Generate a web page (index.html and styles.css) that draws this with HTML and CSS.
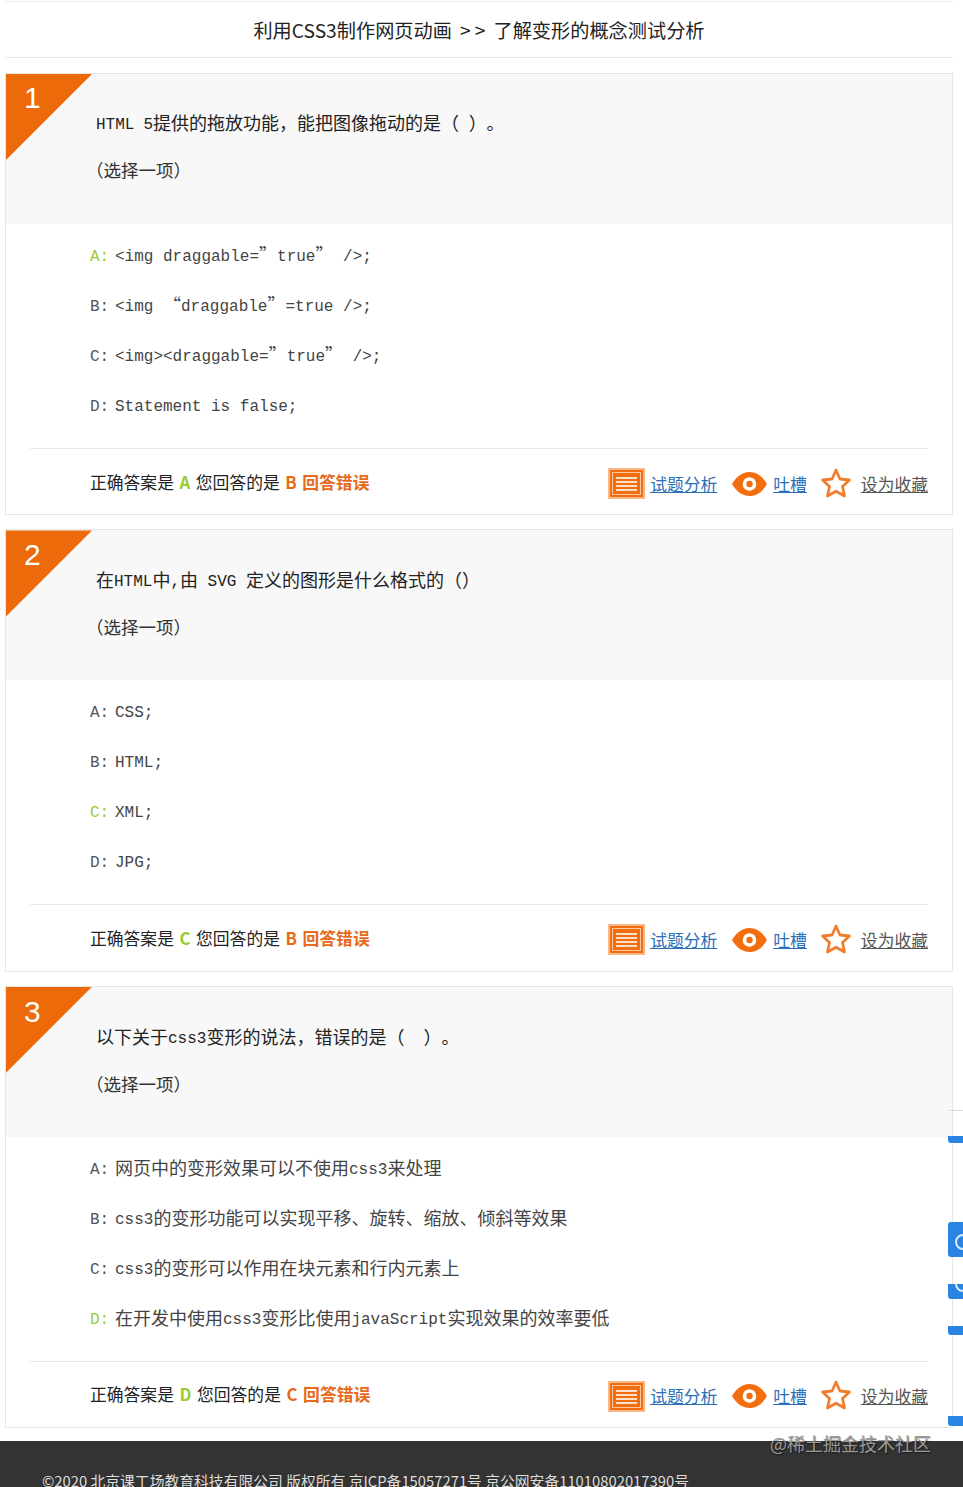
FILE: index.html
```html
<!DOCTYPE html>
<html lang="zh-CN">
<head>
    <meta charset="UTF-8">
    <title>了解变形的概念测试分析</title>
    <link rel="stylesheet" href="styles.css">
</head>
<body>
    <svg class="icon-defs" width="0" height="0">
        <symbol id="icon-book" viewBox="0 0 37 31">
            <rect x="0" y="0" width="37" height="31" fill="#f9b88a"/>
            <rect x="2" y="2" width="33" height="27" fill="#f26d0e"/>
            <rect x="4.5" y="4.5" width="28" height="22" fill="none" stroke="#fbc79f" stroke-width="1"/>
            <rect x="8" y="9" width="21" height="2" fill="#fde0c8"/>
            <rect x="8" y="13" width="21" height="2" fill="#fde0c8"/>
            <rect x="8" y="17" width="21" height="2" fill="#fde0c8"/>
            <rect x="8" y="21" width="21" height="2" fill="#fde0c8"/>
        </symbol>
        <symbol id="icon-eye" viewBox="0 0 35 24">
            <path d="M0 12C4 5 10 0 17.5 0S31 5 35 12C31 19 25 24 17.5 24S4 19 0 12Z" fill="#f26d0e"/>
            <circle cx="17.5" cy="12" r="6.8" fill="#fff"/>
            <circle cx="17.5" cy="12" r="3.2" fill="#f26d0e"/>
        </symbol>
        <symbol id="icon-star" viewBox="0 0 32 32">
            <path d="M16 3L20 12L29.5 13L22.5 19.6L24.5 29L16 24.2L7.5 29L9.500 19.6L2.500 13L12 12Z" fill="none" stroke="#ef7f2e" stroke-width="2.8" stroke-linejoin="round"/>
        </symbol>
    </svg>

    <div class="page">
        <h1 class="title">利用CSS3制作网页动画<span class="sep">&gt; &gt;</span>了解变形的概念测试分析</h1>

        <div class="card">
            <div class="question">
                <div class="badge"><span>1</span></div>
                <p class="q-text"><span class="en">HTML</span><span class="en gap">5</span>提供的拖放功能，能把图像拖动的是（<span class="en"> </span>）。</p>
                <p class="q-type">（选择一项）</p>
            </div>
            <ul class="options">
                <li><b class="key right">A:</b><span class="en">&lt;img draggable=</span>”<span class="en">true</span>”<span class="en"> /&gt;;</span></li>
                <li><b class="key">B:</b><span class="en">&lt;img </span>“<span class="en">draggable</span>”<span class="en">=true /&gt;;</span></li>
                <li><b class="key">C:</b><span class="en">&lt;img&gt;&lt;draggable=</span>”<span class="en">true</span>”<span class="en"> /&gt;;</span></li>
                <li><b class="key">D:</b><span class="en">Statement is false;</span></li>
            </ul>
            <div class="result">
                <div class="verdict">正确答案是 <b class="ok">A</b> 您回答的是 <b class="bad">B 回答错误</b></div>
                <div class="links">
                    <svg class="i-book"><use href="#icon-book"/></svg><a href="#">试题分析</a>
                    <svg class="i-eye"><use href="#icon-eye"/></svg><a href="#">吐槽</a>
                    <svg class="i-star"><use href="#icon-star"/></svg><a href="#" class="fav">设为收藏</a>
                </div>
            </div>
        </div>

        <div class="card">
            <div class="question">
                <div class="badge"><span>2</span></div>
                <p class="q-text">在<span class="en">HTML</span>中<span class="en">,</span>由<span class="en"> SVG </span>定义的图形是什么格式的（）</p>
                <p class="q-type">（选择一项）</p>
            </div>
            <ul class="options">
                <li><b class="key">A:</b><span class="en">CSS;</span></li>
                <li><b class="key">B:</b><span class="en">HTML;</span></li>
                <li><b class="key right">C:</b><span class="en">XML;</span></li>
                <li><b class="key">D:</b><span class="en">JPG;</span></li>
            </ul>
            <div class="result">
                <div class="verdict">正确答案是 <b class="ok">C</b> 您回答的是 <b class="bad">B 回答错误</b></div>
                <div class="links">
                    <svg class="i-book"><use href="#icon-book"/></svg><a href="#">试题分析</a>
                    <svg class="i-eye"><use href="#icon-eye"/></svg><a href="#">吐槽</a>
                    <svg class="i-star"><use href="#icon-star"/></svg><a href="#" class="fav">设为收藏</a>
                </div>
            </div>
        </div>

        <div class="card">
            <div class="question">
                <div class="badge"><span>3</span></div>
                <p class="q-text">以下关于<span class="en">css3</span>变形的说法，错误的是（<span class="en">  </span>）。</p>
                <p class="q-type">（选择一项）</p>
            </div>
            <ul class="options">
                <li><b class="key">A:</b>网页中的变形效果可以不使用<span class="en">css3</span>来处理</li>
                <li><b class="key">B:</b><span class="en">css3</span>的变形功能可以实现平移、旋转、缩放、倾斜等效果</li>
                <li><b class="key">C:</b><span class="en">css3</span>的变形可以作用在块元素和行内元素上</li>
                <li><b class="key right">D:</b>在开发中使用<span class="en">css3</span>变形比使用<span class="en">javaScript</span>实现效果的效率要低</li>
            </ul>
            <div class="result">
                <div class="verdict">正确答案是 <b class="ok">D</b> 您回答的是 <b class="bad">C 回答错误</b></div>
                <div class="links">
                    <svg class="i-book"><use href="#icon-book"/></svg><a href="#">试题分析</a>
                    <svg class="i-eye"><use href="#icon-eye"/></svg><a href="#">吐槽</a>
                    <svg class="i-star"><use href="#icon-star"/></svg><a href="#" class="fav">设为收藏</a>
                </div>
            </div>
        </div>
    </div>

    <div class="footer">©2020 北京课工场教育科技有限公司 版权所有 京ICP备15057271号 京公网安备11010802017390号</div>

    <!-- clipped floating toolbar on the right edge -->
    <div class="side-line"></div>
    <div class="side-tab tab-a"></div>
    <div class="side-tab tab-b"><i></i></div>
    <div class="side-tab tab-c"><i></i></div>
    <div class="side-tab tab-d"></div>
    <div class="side-tab tab-e"></div>

    <div class="watermark">@稀土掘金技术社区</div>
</body>
</html>
```

FILE: styles.css
```css
* {
    box-sizing: border-box;
}

html, body {
    height: 1487px;
    margin: 0;
    overflow: hidden;
}

body {
    position: relative;
    background-color: #fff;
    color: #222;
    font-family: "Noto Sans CJK SC", "Liberation Sans", sans-serif;
    text-spacing-trim: space-all;
}

.icon-defs {
    position: absolute;
}

.page {
    padding: 1px 10px 0 5px;
}

/* Title bar */
.title {
    height: 57px;
    margin: 0 0 15px;
    border-top: 1px solid #eee;
    border-bottom: 1px solid #e8e8e8;
    color: #222;
    font-size: 19.2px;
    font-weight: normal;
    line-height: 56px;
    text-align: center;
}

.sep {
    margin: 0 8px;
}

/* Question card */
.card {
    height: 442.4px;
    margin-bottom: 14px;
    border: 1px solid #e6e6e6;
}

.question {
    position: relative;
    height: 150px;
    padding: 24px 0 0 90px;
    background-color: #f8f8f8;
}

.card + .card .question {
    padding-top: 25px;
}

.badge {
    position: absolute;
    top: 0;
    left: 0;
    width: 86px;
    height: 86px;
    background-color: #ec6a09;
    clip-path: polygon(0 0, 100% 0, 0 100%);
}

.badge span {
    position: absolute;
    top: 4px;
    left: 18px;
    color: #fff;
    font-family: "Liberation Sans", sans-serif;
    font-size: 30px;
    line-height: 40px;
}

.card + .card .badge span {
    top: 5px;
}

.q-text, .q-type {
    height: 48px;
    margin: 0;
    font-size: 18px;
    line-height: 48px;
    white-space: pre;
}

.q-type {
    margin-left: -10px;
    color: #333;
    font-size: 17.5px;
}

.en {
    font-family: "Liberation Mono", monospace;
    font-size: 16px;
    vertical-align: 1px;
    white-space: pre;
}

.gap {
    margin-left: 9px;
}

/* Options */
.options {
    height: 224.1px;
    margin: 0;
    padding: 5px 0 0 84px;
    list-style: none;
}

.options li {
    height: 50px;
    color: #444;
    font-size: 18px;
    line-height: 50px;
    white-space: pre;
}

.key {
    display: inline-block;
    width: 25px;
    color: #555;
    font-family: "Liberation Mono", monospace;
    font-size: 16px;
    font-weight: normal;
    vertical-align: 1px;
}

.key.right {
    color: #9c3;
}

/* Answer row */
.result {
    display: flex;
    align-items: center;
    justify-content: space-between;
    height: 66px;
    margin: 0 24px;
    padding-left: 60px;
    border-top: 1px solid #e8e8e8;
}

.verdict {
    font-size: 16.8px;
    word-spacing: 1.8px;
    color: #222;
}

.ok {
    color: #9c3;
}

.bad {
    color: #e8691a;
}

.links {
    display: flex;
    align-items: center;
    padding-top: 4px;
    font-size: 16.8px;
}

.links a {
    color: #2a6fb8;
}

.links a.fav {
    color: #555;
}

.i-book {
    width: 37px;
    height: 31px;
    margin-right: 5px;
}

.i-eye {
    width: 35px;
    height: 24px;
    margin: 0 6px 0 15px;
}

.i-star {
    width: 32px;
    height: 32px;
    margin: -2px 9px 0 13px;
}

/* Footer */
.footer {
    margin-top: -1px;
    height: 60px;
    padding: 29px 0 0 42px;
    background-color: #333;
    color: #ddd;
    font-size: 14.8px;
    white-space: nowrap;
}

/* Toolbar pieces that poke in from the right edge */
.side-line {
    position: absolute;
    top: 1110px;
    right: 0;
    width: 15px;
    height: 1px;
    background-color: #ddd;
}

.side-tab {
    position: absolute;
    left: 948px;
    width: 20px;
    background-color: #2a84e4;
    border-radius: 0 0 0 3px;
    overflow: hidden;
}

.tab-a { top: 1136px; height: 7px; }
.tab-b { top: 1222px; height: 35px; border-radius: 3px 0 0 3px; }
.tab-c { top: 1284px; height: 15px; }
.tab-d { top: 1326px; height: 9px; }
.tab-e { top: 1416px; height: 10px; }

.side-tab i {
    position: absolute;
    left: 7px;
    width: 16px;
    height: 16px;
    border: 2px solid #dcecfb;
    border-radius: 50%;
}

.tab-b i { top: 12px; }
.tab-c i { top: -8px; }

.watermark {
    position: absolute;
    top: 1430px;
    left: 770px;
    color: #999;
    font-size: 18px;
    text-shadow: 1px 1px 1px rgba(0, 0, 0, 0.5);
    white-space: nowrap;
}
```
